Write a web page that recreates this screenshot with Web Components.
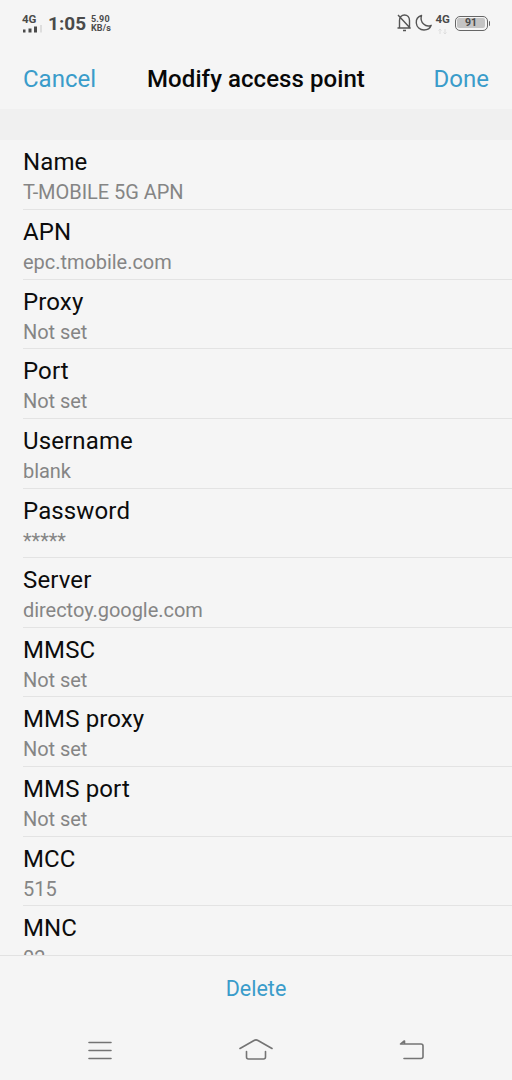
<!DOCTYPE html>
<html lang="en">
<head>
<meta charset="utf-8">
<title>Modify access point</title>
<style>
html,body{margin:0;height:100%;background:#f5f5f5}
body{font-family:Roboto,"Liberation Sans",sans-serif;overflow:hidden}
</style>
</head>
<body>
<apn-screen></apn-screen>
<script>
function define(name, html, setup) {
  const template = document.createElement('template');
  template.innerHTML = html;
  customElements.define(name, class extends HTMLElement {
    constructor() {
      super();
      this.attachShadow({ mode: 'open' }).append(template.content.cloneNode(true));
    }
    connectedCallback() { if (setup) setup(this, this.shadowRoot); }
  });
}

define('status-bar', `
<style>
:host{display:flex;height:46px;box-sizing:border-box;padding:0 22px;color:#4a4a4a;justify-content:space-between;align-items:center}
.side{display:flex;align-items:center}
.net{display:flex;flex-direction:column;width:20px;margin-right:6px}
.net b,.mini b{font-size:11.5px;line-height:11px;font-weight:700}
.time{font-size:19px;line-height:24px;font-weight:700;width:38px;margin-right:5px;white-space:nowrap;padding-top:2px}
.speed{font-size:9px;line-height:9px;font-weight:700;white-space:nowrap;letter-spacing:.15px;padding-top:1px}
.speed span{display:block}
svg{display:block;flex:none}
.mini{width:15px;margin:-3px 4px 0 2px}
.battery{display:flex;box-sizing:border-box;width:33px;height:15px;border:1px solid #666;border-radius:5px;padding:1.500px}
.battery b{flex:1;background:#c4c4c4;border-radius:2px;font-size:10.5px;line-height:10.5px;text-align:center}
.tip{width:1.5px;height:5px;background:#666;border-radius:0 1px 1px 0;margin:0 0 0 1px}
</style>
<div class="side">
  <div class="net"><b>4G</b>
    <svg width="20" height="8" viewBox="0 0 20 8"><path d="M1 4.500h2.500v3H1zM6.500 3.500h3v4h-3zM12 1.500h3v6h-3z" fill="#4a4a4a"/><path d="M18 0h2v7.500h-2z" fill="#ddd"/></svg>
  </div>
  <div class="time">1:05</div>
  <div class="speed"><span>5.90</span><span>KB/s</span></div>
</div>
<div class="side">
  <svg width="18" height="20" viewBox="0 0 18 20" fill="none" stroke="#555" stroke-width="1.400"><path d="M3.500 14.500V7.500C3.500 4.300 5.500 2 8.500 2s5 2.300 5 5.500v7M1.500 15h13M7 17.500h3M2 2l12.500 13.500"/></svg>
  <svg width="20" height="20" viewBox="0 0 20 20" fill="none" stroke="#555" stroke-width="1.400" stroke-linejoin="round"><path d="M7.500 2.500C4 3.500 2 6.500 2.300 10c.3 4 3.600 7 7.700 7 3.500 0 6.200-1.800 7.200-4.700-2.300 1-5.500.7-7.600-1.300C7.200 8.800 6.600 5.500 7.500 2.500z"/></svg>
  <div class="mini"><b>4G</b><svg width="15" height="8" viewBox="0 0 15 8" stroke="#ddd" fill="none"><path d="M4 7V2M2.500 3.500 4 2l1.500 1.500M9 2v5M7.500 5.500 9 7l1.500-1.500"/></svg></div>
  <div class="battery"><b>91</b></div><div class="tip"></div>
</div>`);

define('nav-header', `
<style>
:host{display:grid;grid-template-columns:1fr auto 1fr;align-items:center;height:63px;padding:3px 23px 0;font-size:24px;line-height:30px;color:#3a9cca;box-sizing:border-box}
.title{color:#080808;font-weight:500;white-space:nowrap;letter-spacing:.07px}
.end{text-align:right}
</style>
<span><slot name="start"></slot></span><span class="title"><slot></slot></span><span class="end"><slot name="end"></slot></span>`);

define('setting-row', `
<style>
:host{display:block;box-sizing:border-box;height:69.64px;flex:none;margin-left:23px;padding-top:7px;border-bottom:1px solid #e3e3e3}
.label{font-size:24px;line-height:30px;color:#0c0c0c;letter-spacing:.13px}
.value{font-size:20px;line-height:24px;padding-top:3px;color:#858585;letter-spacing:-.04px}
</style>
<div class="label"></div><div class="value"><slot></slot></div>`, (host, root) => {
  root.querySelector('.label').textContent = host.getAttribute('label');
});

define('settings-list', `
<style>
:host{display:flex;flex-direction:column;flex:1;min-height:0;overflow:hidden;border-bottom:1px solid #e2e2e2}
.gap{height:31.4px;flex:none;background:#f0f0f0}
</style>
<div class="gap"></div><slot></slot>`);

define('delete-action', `
<style>
:host{display:flex;height:64px;align-items:center;justify-content:center;color:#3a9cca;font-size:21.5px;line-height:26px;padding-top:1px;box-sizing:border-box}
</style><slot></slot>`);

define('system-nav', `
<style>
:host{display:flex;height:60px;box-sizing:border-box;padding:0 84px;justify-content:space-between;align-items:center}
svg{display:block;fill:none;stroke:#747474;stroke-width:1.6;stroke-linecap:round;stroke-linejoin:round}
</style>
<svg width="32" height="30" viewBox="0 0 32 30"><path d="M5 7.500h22M5 15.500h22M5 23.500h22"/></svg>
<svg width="36" height="30" viewBox="0 0 36 30"><path d="M2 13.500 16 5.500q2-1.200 4 0l14 8M8.500 16.500v5.500q0 2 2 2h15q2 0 2-2v-5.500"/></svg>
<svg width="32" height="30" viewBox="0 0 32 30"><path d="M8 6 4.500 9H25q2 0 2 2v10.500q0 2-2 2H8M4.500 9h4V6"/></svg>`);

define('apn-screen', `
<style>:host{display:flex;flex-direction:column;width:512px;height:1080px;background:#f5f5f5;overflow:hidden}</style>
<status-bar></status-bar>
<nav-header><span slot="start">Cancel</span>Modify access point<span slot="end">Done</span></nav-header>
<settings-list>
<setting-row label="Name">T-MOBILE 5G APN</setting-row>
<setting-row label="APN">epc.tmobile.com</setting-row>
<setting-row label="Proxy">Not set</setting-row>
<setting-row label="Port">Not set</setting-row>
<setting-row label="Username">blank</setting-row>
<setting-row label="Password">*****</setting-row>
<setting-row label="Server">directoy.google.com</setting-row>
<setting-row label="MMSC">Not set</setting-row>
<setting-row label="MMS proxy">Not set</setting-row>
<setting-row label="MMS port">Not set</setting-row>
<setting-row label="MCC">515</setting-row>
<setting-row label="MNC">02</setting-row>
</settings-list>
<delete-action>Delete</delete-action>
<system-nav></system-nav>`);
</script>
</body>
</html>
